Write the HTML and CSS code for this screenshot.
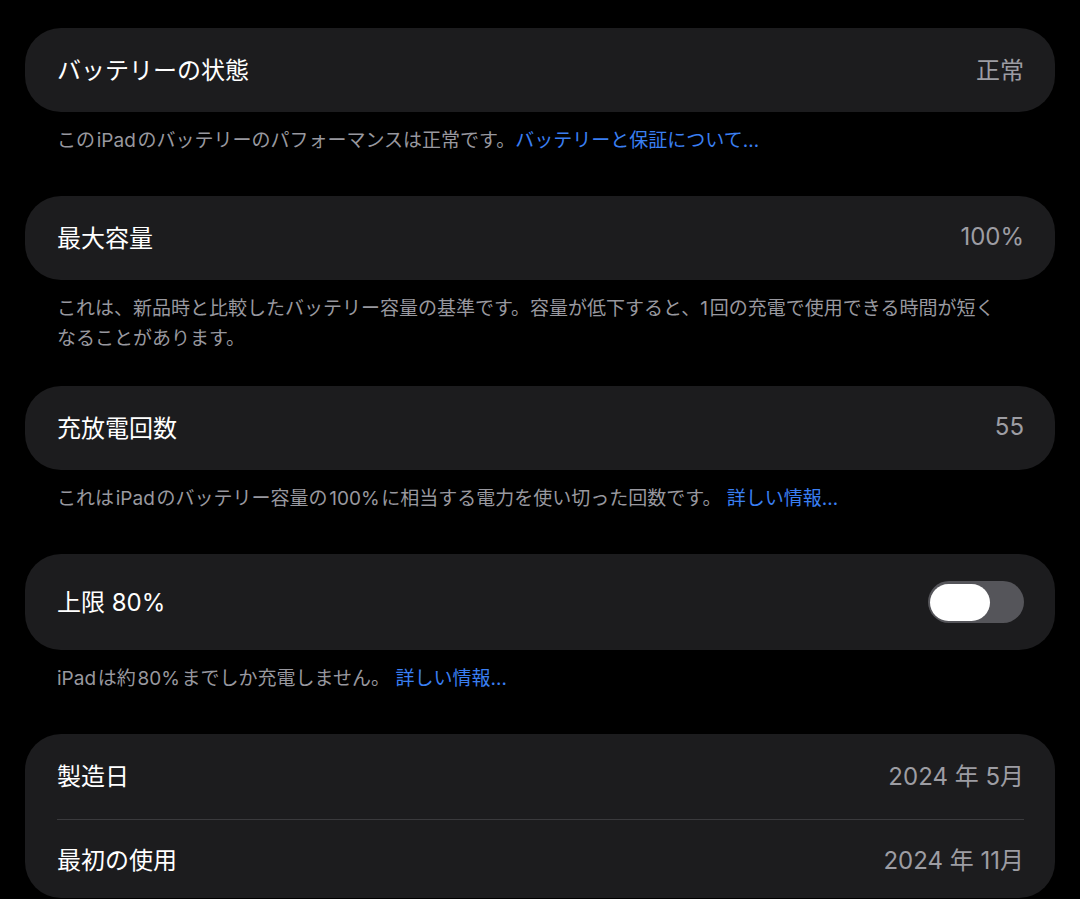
FILE: index.html
```html
<!DOCTYPE html>
<html lang="ja">
<head>
<meta charset="utf-8">
<title>バッテリー</title>
<link rel="stylesheet" href="styles.css">
</head>
<body>
<main class="page">
  <section class="group">
    <div class="card">
      <div class="row">
        <span class="row-title">バッテリーの状態</span>
        <span class="row-value">正常</span>
      </div>
    </div>
    <p class="footer">この&#8202;iPad&#8202;のバッテリーのパフォーマンスは正常です。<a class="link" href="#">バッテリーと保証について…</a></p>
  </section>

  <section class="group group--tight">
    <div class="card">
      <div class="row">
        <span class="row-title">最大容量</span>
        <span class="row-value">100%</span>
      </div>
    </div>
    <p class="footer">これは、新品時と比較したバッテリー容量の基準です。容量が低下すると、1&#8202;回の充電で使用できる時間が短くなることがあります。</p>
  </section>

  <section class="group">
    <div class="card">
      <div class="row">
        <span class="row-title">充放電回数</span>
        <span class="row-value">55</span>
      </div>
    </div>
    <p class="footer">これは&#8202;iPad&#8202;のバッテリー容量の&#8202;100%&#8202;に相当する電力を使い切った回数です。 <a class="link" href="#">詳しい情報…</a></p>
  </section>

  <section class="group">
    <div class="card">
      <div class="row row--toggle">
        <span class="row-title">上限 80%</span>
        <span class="toggle" role="switch" aria-checked="false"><span class="knob"></span></span>
      </div>
    </div>
    <p class="footer">iPad&#8202;は約&#8202;80%&#8202;までしか充電しません。 <a class="link" href="#">詳しい情報…</a></p>
  </section>

  <section class="group">
    <div class="card">
      <div class="row row--list">
        <span class="row-title">製造日</span>
        <span class="row-value">2024 年 5月</span>
      </div>
      <div class="separator"></div>
      <div class="row row--last">
        <span class="row-title">最初の使用</span>
        <span class="row-value">2024 年 11月</span>
      </div>
    </div>
  </section>
</main>
</body>
</html>
```

FILE: styles.css
```css
html, body {
  margin: 0;
  padding: 0;
  background: #000;
}

body {
  font-family: Inter, "Noto Sans CJK JP", "Noto Sans", sans-serif;
  color: #fff;
  overflow: hidden;
  height: 899px;
}

.page {
  padding: 28px 25px 0;
  display: flex;
  flex-direction: column;
}

.group {
  display: flex;
  flex-direction: column;
  margin-bottom: 40px;
}

.group--tight {
  margin-bottom: 32px;
}

.card {
  background: #1c1c1e;
  border-radius: 36px;
  display: flex;
  flex-direction: column;
}

.row {
  box-sizing: border-box;
  height: 84px;
  padding: 0 31px 4px 32px;
  display: flex;
  align-items: center;
  justify-content: space-between;
}

.row--toggle {
  height: 96px;
}

.row--list {
  height: 85px;
}

.row--last {
  height: 78px;
  padding-bottom: 2px;
}

.row-title {
  font-size: 24px;
  color: #fff;
}

.row-value {
  font-size: 24px;
  color: #9d9da3;
}

.toggle {
  width: 96px;
  height: 42px;
  border-radius: 21px;
  background: #55555a;
  display: flex;
  align-items: center;
  padding: 0 2px;
  box-sizing: border-box;
  margin-top: 4px;
}

.knob {
  width: 60px;
  height: 37px;
  border-radius: 19px;
  background: #fff;
}

.separator {
  height: 1px;
  background: #3a3a3d;
  margin: 0 31px 0 32px;
}

.footer {
  margin: 14px 0 0;
  padding: 0 50px 0 32px;
  font-size: 19px;
  line-height: 30px;
  color: #98989f;
}

.link {
  color: #3a7ff2;
  text-decoration: none;
}
```
